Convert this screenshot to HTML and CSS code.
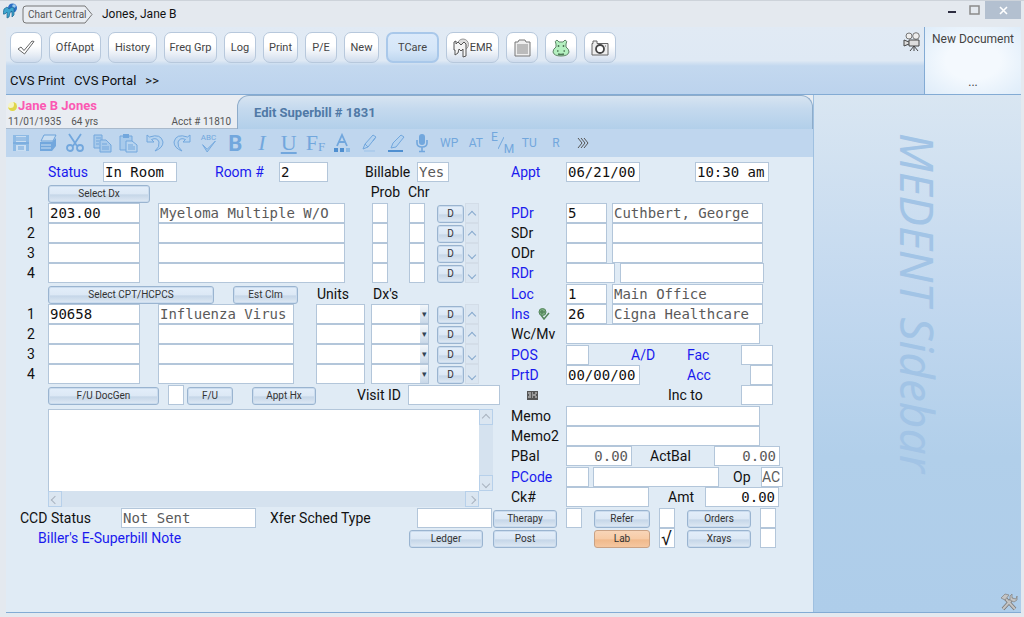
FILE: index.html
```html
<!DOCTYPE html>
<html lang="en">
<head>
    <meta charset="UTF-8">
    <meta name="viewport" content="width=device-width, initial-scale=1.0">
    <title>Jones, Jane B</title>
    <link rel="stylesheet" href="styles.css">
</head>
<body>
    <div class="window">
        <header class="titlebar">
            <svg class="app-icon" viewBox="0 0 16 16"><circle cx="9.500" cy="5" r="4.500" fill="#2b6fc4"/><circle cx="11" cy="3" r="1.800" fill="#9ccbf0"/><path d="M1 6l3-2 2 2 3-2 2 1v7l-2 2V8L7 9.500 6 14l-2 1V9L2 11H0z" fill="#3fa6cf" stroke="#1c6691" stroke-width=".7"/></svg>
            <button class="crumb" type="button">
                <svg viewBox="0 0 71 19"><path d="M4 1h59l7 8.500-7 8.500H4q-3 0-3-3V4q0-3 3-3z" fill="#e9edf2" stroke="#777" /></svg>
                <span>Chart Central</span>
            </button>
            <h1>Jones, Jane B</h1>
            <div class="window-controls">
                <button type="button" aria-label="Minimize"><svg width="10" height="12" viewBox="0 0 10 12"><path d="M1 8h8" stroke="#2d2d40" stroke-width="2"/></svg></button>
                <button type="button" aria-label="Maximize"><svg width="11" height="10" viewBox="0 0 11 10"><path d="M1 1h9v8H1z" fill="none" stroke="#8b8b8b" stroke-width="1.500"/></svg></button>
                <button type="button" class="close" aria-label="Close"><svg width="9" height="9" viewBox="0 0 9 9"><path d="M1 1l7 7M8 1L1 8" stroke="#fff" stroke-width="1.600"/></svg></button>
            </div>
        </header>

        <div class="topbar">
            <div class="topbar-main">
                <nav class="toolbar">
                    <button type="button" class="tool w-sm" aria-label="OK"><svg width="18" height="15" viewBox="0 0 18 15"><path d="M1 9l3-2 3 3.500L15 1l2 .5L7.500 14z" fill="#fff" stroke="#666"/></svg></button>
                    <button type="button" class="tool w-lg">OffAppt</button>
                    <button type="button" class="tool w-md">History</button>
                    <button type="button" class="tool w-xl">Freq Grp</button>
                    <button type="button" class="tool w-sm">Log</button>
                    <button type="button" class="tool w-ms">Print</button>
                    <button type="button" class="tool w-sm">P/E</button>
                    <button type="button" class="tool w-ms">New</button>
                    <button type="button" class="tool w-xl active">TCare</button>
                    <button type="button" class="tool w-xl"><svg width="17" height="20" viewBox="0 0 17 20"><circle cx="10" cy="6.500" r="5.500" fill="#ddd" stroke="#999"/><path d="M1 4l2-1v3l2-2 3 3 3-3 2 2v12l-3 1v-8l-2 2-2-2-1 4-3 2v-5H1z" fill="#f4f4f4" stroke="#555"/></svg>EMR</button>
                    <button type="button" class="tool w-sm" aria-label="Clipboard"><svg width="17" height="18" viewBox="0 0 17 18"><path d="M1 3h3l1-2h6l1 2h4v14H1z" fill="#eee" stroke="#777"/><path d="M3 6h11M3 8h11M3 10h11M3 12h11M3 14h11" stroke="#888"/></svg></button>
                    <button type="button" class="tool w-sm" aria-label="Hippo"><svg width="18" height="18" viewBox="0 0 18 18"><path d="M4 5q-2-3 1-4l2 2h4l2-2q3 1 1 4v3q3 2 3 5-1 4-8 4t-8-4q0-3 3-5z" fill="#b4f0c0" stroke="#5f8568"/><path d="M6.500 6v2M11.500 6v2M5 12h1.500M11.500 12H13M6 15q3 1 6 0" fill="none" stroke="#4f7757" stroke-width="1.500"/></svg></button>
                    <button type="button" class="tool w-sm" aria-label="Camera"><svg width="18" height="16" viewBox="0 0 18 16"><path d="M1 3.500h1V1h4v2.500h11V15H1z" fill="#eee" stroke="#666"/><circle cx="9" cy="9" r="4" fill="#fff" stroke="#444" stroke-width="1.800"/><path d="M14 6h1" stroke="#666"/></svg></button>
                </nav>
                <nav class="links">
                    <a href="#">CVS Print</a>
                    <a href="#">CVS Portal</a>
                    <a href="#">&gt;&gt;</a>
                </nav>
            </div>
            <svg class="movie" viewBox="0 0 18 20"><circle cx="6" cy="4" r="3" fill="#eee" stroke="#777"/><circle cx="13" cy="4" r="3.300" fill="#eee" stroke="#777"/><path d="M6 8h10v6H6zM6 10L1 8v6l5-2" fill="#ddd" stroke="#444"/><path d="M11 14l-4 5M11 14v5M11 14l4 5" stroke="#444"/></svg>
            <aside class="new-document">
                <p>New Document</p>
                <p class="dots">...</p>
            </aside>
        </div>

        <div class="content">
            <main>
                <div class="tabs">
                    <section class="patient">
                        <h2><span class="moon"></span>Jane B Jones</h2>
                        <p><span>11/01/1935</span><span class="age">64 yrs</span><span class="acct">Acct # 11810</span></p>
                    </section>
                    <h3 class="tab">Edit Superbill # 1831</h3>
                </div>

                <div class="edit-bar">
                    <button type="button" aria-label="Save"><svg viewBox="0 0 20 20"><path d="M2 2h16v16H2z" fill="#8dbae5"/><path d="M5 3h10v6H5zM5 12h10v6H5z" fill="#c9def2"/><path d="M5 5h10M5 7h10M7 14h6M7 16h6M2 10h16" stroke="#6ca3da"/></svg></button>
                    <button type="button" aria-label="Print"><svg viewBox="0 0 20 20"><path d="M6 2h12l-3 6H3z" fill="#c9def2" stroke="#6ca3da"/><path d="M2 9h12l4-4v8l-4 5H2z" fill="#72a7dd"/><path d="M3 12h10M3 15h10M8 4h7M7 6h7" stroke="#c9def2"/></svg></button>
                    <button type="button" aria-label="Cut"><svg viewBox="0 0 20 20"><path d="M4 1l8 12M16 1L8 13" stroke="#72a7dd" stroke-width="1.800"/><circle cx="5" cy="15" r="3" fill="none" stroke="#72a7dd" stroke-width="1.800"/><circle cx="15" cy="15" r="3" fill="none" stroke="#72a7dd" stroke-width="1.800"/></svg></button>
                    <button type="button" aria-label="Copy"><svg viewBox="0 0 20 20"><path d="M2 2h8v13H2z" fill="#a8caeb" stroke="#72a7dd"/><path d="M8 7h6l5 5v7H8z" fill="#a8caeb" stroke="#72a7dd"/><path d="M4 5h5M4 8h3M4 11h3M10 11h5M10 14h7M10 16h7" stroke="#72a7dd"/></svg></button>
                    <button type="button" aria-label="Paste"><svg viewBox="0 0 20 20"><path d="M2 3h12v14H2z" fill="#a8caeb" stroke="#72a7dd"/><path d="M5 1h6v4H5z" fill="#72a7dd"/><path d="M8 8h6l5 4v7H8z" fill="#b8d4ef" stroke="#72a7dd"/><path d="M10 12h5M10 14h7M10 16h7" stroke="#72a7dd"/></svg></button>
                    <button type="button" aria-label="Undo"><svg viewBox="0 0 20 20"><path d="M2 2v7h7L6.500 6.500Q12 4 14 9q1 5-4 9 8-3 8-9Q16 0 4.500 4z" fill="#b6d3ef" stroke="#72a7dd"/></svg></button>
                    <button type="button" aria-label="Redo"><svg viewBox="0 0 20 20"><path d="M18 2v7h-7l2.500-2.500Q8 4 6 9q-1 5 4 9-8-3-8-9Q4 0 15.500 4z" fill="#b6d3ef" stroke="#72a7dd"/></svg></button>
                    <button type="button" class="spell"><span>ABC</span><svg viewBox="0 0 20 12"><path d="M3 4l5 5 9-9-9 12z" fill="#a8caeb" stroke="#72a7dd"/></svg></button>
                    <button type="button" class="glyph bold">B</button>
                    <button type="button" class="glyph italic">I</button>
                    <button type="button" class="glyph under">U</button>
                    <button type="button" class="glyph font">F<small>F</small></button>
                    <button type="button" aria-label="Font color"><svg viewBox="0 0 20 20"><path d="M5 13L10 2l5 11M7 9h6" fill="none" stroke="#72a7dd" stroke-width="1.800"/><path d="M2 15h4v4H2zM8 15h4v4H8z" fill="#4f8fd0"/><path d="M14 15h4v4h-4z" fill="#8dbae5"/></svg></button>
                    <button type="button" aria-label="Pencil"><svg viewBox="0 0 20 20"><path d="M4 16l2-5 8-9 3 2-8 10zM14 8l2-3M6 11l3 3" fill="#b6d3ef" stroke="#72a7dd"/><path d="M5 18h11" stroke="#9dc3e9"/></svg></button>
                    <button type="button" aria-label="Highlighter"><svg viewBox="0 0 20 20"><path d="M5 15l2-5 8-8 3 2-8 10z" fill="#b6d3ef" stroke="#72a7dd"/><path d="M2 18h15" stroke="#4f8fd0" stroke-width="2"/></svg></button>
                    <button type="button" aria-label="Dictate"><svg viewBox="0 0 20 20"><rect x="7" y="1" width="6" height="11" rx="3" fill="#72a7dd"/><path d="M5 7v3q0 4 5 4t5-4V7M10 14v4M7 18.500h6" fill="none" stroke="#72a7dd" stroke-width="1.600"/></svg></button>
                    <button type="button">WP</button>
                    <button type="button">AT</button>
                    <button type="button" class="em"><span>E</span><svg viewBox="0 0 6 14"><path d="M6 1L0 13" stroke="#72a7dd"/></svg><span>M</span></button>
                    <button type="button">TU</button>
                    <button type="button">R</button>
                    <button type="button" aria-label="More"><svg class="more" viewBox="0 0 12 12"><path d="M1 1l4 5-4 5M4 1l4 5-4 5M7 1l4 5-4 5" fill="none" stroke="#555"/></svg></button>
                </div>

                <form class="superbill">
                    <div class="columns">
                        <div class="left">
                            <div class="row status-row">
                                <label class="blue" for="status">Status</label>
                                <input id="status" class="w8" value="In Room">
                                <label class="blue" for="room">Room #</label>
                                <input id="room" class="w5" value="2">
                                <label for="billable">Billable</label>
                                <input id="billable" class="w3" value="Yes" readonly>
                            </div>
                            <div class="head-row dx-head">
                                <button type="button" class="btn">Select Dx</button>
                                <span>Prob</span>
                                <span>Chr</span>
                            </div>
                            <div class="group dx">
                                <div class="row">
                                    <span>1</span><input class="code" aria-label="Dx code 1" value="203.00"><input class="desc" aria-label="Diagnosis 1" value="Myeloma Multiple W/O" readonly>
                                    <input class="tick" aria-label="Prob 1"><input class="tick" aria-label="Chr 1"><button type="button" class="btn d">D</button><button type="button" class="arrow up" aria-label="First"></button>
                                </div>
                                <div class="row">
                                    <span>2</span><input class="code" aria-label="Dx code 2"><input class="desc" aria-label="Diagnosis 2" readonly>
                                    <input class="tick" aria-label="Prob 2"><input class="tick" aria-label="Chr 2"><button type="button" class="btn d">D</button><button type="button" class="arrow up" aria-label="Up"></button>
                                </div>
                                <div class="row">
                                    <span>3</span><input class="code" aria-label="Dx code 3"><input class="desc" aria-label="Diagnosis 3" readonly>
                                    <input class="tick" aria-label="Prob 3"><input class="tick" aria-label="Chr 3"><button type="button" class="btn d">D</button><button type="button" class="arrow down" aria-label="Down"></button>
                                </div>
                                <div class="row">
                                    <span>4</span><input class="code" aria-label="Dx code 4"><input class="desc" aria-label="Diagnosis 4" readonly>
                                    <input class="tick" aria-label="Prob 4"><input class="tick" aria-label="Chr 4"><button type="button" class="btn d">D</button><button type="button" class="arrow down" aria-label="Last"></button>
                                </div>
                            </div>
                            <div class="head-row cpt-head">
                                <button type="button" class="btn">Select CPT/HCPCS</button>
                                <button type="button" class="btn">Est Clm</button>
                                <span>Units</span>
                                <span>Dx's</span>
                            </div>
                            <div class="group cpt">
                                <div class="row">
                                    <span>1</span><input class="code" aria-label="CPT code 1" value="90658"><input class="desc" aria-label="Procedure 1" value="Influenza Virus" readonly>
                                    <input class="w5" aria-label="Units 1"><span class="combo"><select aria-label="Dx's 1"><option></option></select></span><button type="button" class="btn d">D</button><button type="button" class="arrow up" aria-label="First"></button>
                                </div>
                                <div class="row">
                                    <span>2</span><input class="code" aria-label="CPT code 2"><input class="desc" aria-label="Procedure 2" readonly>
                                    <input class="w5" aria-label="Units 2"><span class="combo"><select aria-label="Dx's 2"><option></option></select></span><button type="button" class="btn d">D</button><button type="button" class="arrow up" aria-label="Up"></button>
                                </div>
                                <div class="row">
                                    <span>3</span><input class="code" aria-label="CPT code 3"><input class="desc" aria-label="Procedure 3" readonly>
                                    <input class="w5" aria-label="Units 3"><span class="combo"><select aria-label="Dx's 3"><option></option></select></span><button type="button" class="btn d">D</button><button type="button" class="arrow down" aria-label="Down"></button>
                                </div>
                                <div class="row">
                                    <span>4</span><input class="code" aria-label="CPT code 4"><input class="desc" aria-label="Procedure 4" readonly>
                                    <input class="w5" aria-label="Units 4"><span class="combo"><select aria-label="Dx's 4"><option></option></select></span><button type="button" class="btn d">D</button><button type="button" class="arrow down" aria-label="Last"></button>
                                </div>
                            </div>
                            <div class="row visit-row">
                                <button type="button" class="btn">F/U DocGen</button>
                                <input class="tick" aria-label="Follow up">
                                <button type="button" class="btn fu">F/U</button>
                                <button type="button" class="btn appt">Appt Hx</button>
                                <label for="visit">Visit ID</label>
                                <input id="visit">
                            </div>
                            <div class="note">
                                <textarea aria-label="Note"></textarea>
                                <div class="vbar"><i class="arrow up"></i><i class="arrow down"></i></div>
                                <div class="hbar"><i class="arrow prev"></i><i class="arrow next"></i></div>
                            </div>
                        </div>

                        <div class="right">
                            <div class="row appt-row">
                                <label class="blue" for="appt">Appt</label>
                                <input id="appt" class="w8" value="06/21/00">
                                <input class="w8" aria-label="Appt time" value="10:30 am">
                            </div>
                            <div class="group">
                                <div class="row provider"><label class="blue" for="pdr">PDr</label><input id="pdr" value="5"><input aria-label="PDr name" value="Cuthbert, George" readonly></div>
                                <div class="row provider"><label for="sdr">SDr</label><input id="sdr"><input aria-label="SDr name" readonly></div>
                                <div class="row provider"><label for="odr">ODr</label><input id="odr"><input aria-label="ODr name" readonly></div>
                                <div class="row provider wide"><label class="blue" for="rdr">RDr</label><input id="rdr"><input aria-label="RDr name" readonly></div>
                            </div>
                            <div class="group">
                                <div class="row provider"><label class="blue" for="loc">Loc</label><input id="loc" value="1"><input aria-label="Location name" value="Main Office" readonly></div>
                                <div class="row provider"><label class="blue ins" for="ins">Ins <svg width="12" height="12" viewBox="0 0 12 12"><circle cx="4.500" cy="4" r="3.500" fill="#7cae83" stroke="#55865c"/><path d="M3 7l3 4 5-6M4 2v4M2 4h5" fill="none" stroke="#55865c" stroke-width="1.500"/></svg></label><input id="ins" value="26"><input aria-label="Insurance name" value="Cigna Healthcare" readonly></div>
                                <div class="row memo"><label for="wcmv">Wc/Mv</label><input id="wcmv"></div>
                            </div>
                            <div class="group codes">
                                <div class="row"><label class="blue" for="pos">POS</label><input id="pos" class="w2"><a class="blue" href="#">A/D</a><label class="blue" for="fac">Fac</label><input id="fac" class="w3 end"></div>
                                <div class="row"><label class="blue" for="prtd">PrtD</label><input id="prtd" class="w8" value="00/00/00"><i></i><label class="blue" for="acc">Acc</label><input id="acc" class="w2 end"></div>
                                <div class="row inc"><svg width="11" height="9" viewBox="0 0 11 9"><path d="M0 0h11v9H0z" fill="#555"/><path d="M1 2h3M5 2h1M8 2h2M2 4h2M5 4h4M1 6h3M5 6h1M8 6h2" stroke="#ddd"/></svg><label for="inc">Inc to</label><input id="inc" class="w3 end"></div>
                            </div>
                            <div class="group">
                                <div class="row memo"><label for="memo">Memo</label><input id="memo"></div>
                                <div class="row memo"><label for="memo2">Memo2</label><input id="memo2"></div>
                                <div class="row balance"><label for="pbal">PBal</label><input id="pbal" value="0.00" readonly><label for="actbal">ActBal</label><input id="actbal" value="0.00" readonly></div>
                            </div>
                            <div class="group">
                                <div class="row pcode"><label class="blue" for="pcode">PCode</label><input id="pcode" class="w2"><input aria-label="PCode name"><label for="op">Op</label><input id="op" value="AC" readonly></div>
                                <div class="row check"><label for="ck">Ck#</label><input id="ck"><label for="amt">Amt</label><input id="amt" value="0.00"></div>
                            </div>
                        </div>
                    </div>

                    <div class="bottom">
                        <div class="bottom-left">
                            <div class="row ccd">
                                <label for="ccd">CCD Status</label>
                                <input id="ccd" value="Not Sent" readonly>
                                <label for="xfer">Xfer Sched Type</label>
                                <input id="xfer">
                            </div>
                            <div class="row biller">
                                <a class="blue" href="#">Biller's E-Superbill Note</a>
                                <button type="button" class="btn">Ledger</button>
                            </div>
                        </div>
                        <div class="orders">
                            <button type="button" class="btn">Therapy</button><input class="tick" aria-label="Therapy">
                            <button type="button" class="btn">Refer</button><input class="tick" aria-label="Refer">
                            <button type="button" class="btn">Orders</button><input class="tick" aria-label="Orders">
                            <button type="button" class="btn">Post</button><i></i>
                            <button type="button" class="btn hot">Lab</button><input class="tick checked" aria-label="Lab" value="√">
                            <button type="button" class="btn">Xrays</button><input class="tick" aria-label="Xrays">
                        </div>
                    </div>
                </form>
            </main>

            <aside class="sidebar">
                <p>MEDENT Sidebar</p>
                <svg class="tools" viewBox="0 0 18 18"><path d="M3 16L13 5M5 5l10 11" stroke="#777" stroke-width="3.600"/><path d="M3 16L13 5M5 5l10 11" stroke="#c4c4c4" stroke-width="2"/><path d="M1 5l4-4 4 1-4 5zM12 1v4l4 1 1-3v4l-3 2-4-2V3z" fill="#c4c4c4" stroke="#888" stroke-width=".8"/></svg>
            </aside>
        </div>
    </div>
</body>
</html>
```

FILE: styles.css
```css
:root {
    --field-border: #b3c6da;
    --form-bg: #e0ebf5;
    --line: #83abd4;
    --blue: #1a1aee;
}

* {
    margin: 0;
    padding: 0;
    box-sizing: border-box;
}

body {
    background-color: #e4e9ef;
    color: #111;
    font-family: Roboto, "Open Sans", sans-serif;
    font-size: 14px;
    line-height: 20px;
}

button,
input,
select,
textarea {
    font-family: inherit;
    border-radius: 0;
}

button {
    border: none;
    background: none;
}

a {
    color: inherit;
    text-decoration: none;
}

.window {
    display: flex;
    flex-direction: column;
    min-height: 100vh;
    padding: 0 3px 4px 6px;
    border-top: 1px solid #cdd3da;
}

/* title bar */
.titlebar {
    display: flex;
    align-items: center;
    height: 26px;
}

.app-icon {
    width: 16px;
    height: 16px;
    margin: 0 0 6px -3px;
}

.crumb {
    position: relative;
    width: 71px;
    height: 19px;
    margin-left: 3px;
    font-size: 10px;
    color: #555;
}

.crumb svg {
    display: block;
    width: 71px;
    height: 19px;
}

.crumb span {
    position: absolute;
    left: 6px;
    top: 0;
    line-height: 19px;
    white-space: nowrap;
}

.titlebar h1 {
    margin-left: 9px;
    font-size: 12px;
    font-weight: 400;
}

.window-controls {
    display: flex;
    align-self: flex-start;
    margin-left: auto;
}

.window-controls button {
    display: flex;
    align-items: center;
    justify-content: center;
    width: 22px;
    height: 18px;
}

.window-controls .close {
    width: 36px;
    background-color: #b3c0d0;
}

/* top toolbar */
.topbar {
    display: flex;
    height: 68px;
    border-bottom: 1px solid var(--line);
    background-image: linear-gradient(#e1eaf4, #dfe9f4 50%, #c3d8ef 58%, #bcd3ed);
}

.topbar-main {
    flex: 1;
}

.toolbar {
    display: flex;
    gap: 7px;
    padding: 5px 4px 0;
}

.tool {
    display: flex;
    align-items: center;
    justify-content: center;
    height: 31px;
    border: 1px solid #b7c8dc;
    border-radius: 7px;
    background-image: linear-gradient(#fff 45%, #e7edf5 75%, #cfdced);
    color: #444;
    font-size: 11px;
}

.tool.active {
    border: 2px solid #a9c8ea;
    background-image: linear-gradient(#dceafa, #d5e6f8 60%, #bfd7f0);
}

.w-sm { width: 32px; }
.w-ms { width: 35px; }
.w-md { width: 49px; }
.w-lg { width: 52px; }
.w-xl { width: 53px; }

.links {
    display: flex;
    gap: 9px;
    padding: 8px 4px 0;
    font-size: 13px;
}

.movie {
    width: 18px;
    height: 20px;
    margin: 5px 3px;
}

.new-document {
    display: flex;
    flex-direction: column;
    justify-content: space-between;
    width: 97px;
    padding: 2px 0;
    border-left: 1px solid var(--line);
    background-image: radial-gradient(#f4f9fe 40%, #deecf9);
    color: #444;
    font-size: 12px;
    text-align: center;
}

/* patient and tab strip */
.content {
    display: flex;
    flex: 1;
    border-bottom: 1px solid var(--line);
}

main {
    display: flex;
    flex: 1;
    flex-direction: column;
    background-color: var(--form-bg);
}

.tabs {
    display: flex;
    height: 34px;
    background-color: #e9edf2;
}

.patient {
    width: 231px;
    padding: 2px 6px 0 2px;
    border-bottom: 1px solid #a9b9cb;
}

.patient h2 {
    display: flex;
    align-items: center;
    color: #fb59b3;
    font-size: 13px;
    line-height: 18px;
}

.moon {
    width: 9px;
    height: 9px;
    margin-right: 1px;
    border-radius: 50%;
    background-color: #f6f4c4;
    box-shadow: inset -2px -2px 0 1px #dfd64a;
}

.patient p {
    display: flex;
    color: #555;
    font-size: 10px;
    line-height: 13px;
}

.age {
    margin-left: 10px;
}

.acct {
    margin-left: auto;
}

.tab {
    flex: 1;
    padding-left: 16px;
    border: 1px solid #8eacca;
    border-bottom: none;
    border-radius: 12px 12px 0 0;
    background-image: linear-gradient(#d7e4f1, #c4d9ee 40%, #b2cfea);
    color: #5079a6;
    font-size: 13px;
    line-height: 34px;
}

.edit-bar {
    display: flex;
    height: 28px;
    padding-right: 217px;
    padding-left: 2px;
    background-color: #bfd6ee;
}

.edit-bar button {
    display: flex;
    flex: 1;
    align-items: center;
    justify-content: center;
    width: 0;
    color: #72a7dd;
    font-size: 12px;
}

.edit-bar svg {
    width: 20px;
    height: 20px;
    flex-shrink: 0;
}

.edit-bar .more {
    width: 12px;
    height: 12px;
}

.edit-bar .spell {
    flex-direction: column;
    font-size: 8px;
    line-height: 7px;
}

.edit-bar .spell svg {
    height: 11px;
}

.edit-bar .glyph {
    font-family: "Liberation Serif", serif;
    font-size: 22px;
}

.edit-bar .bold {
    font-family: Roboto, sans-serif;
    font-weight: 700;
}

.italic {
    font-style: italic;
}

.under {
    text-decoration: underline;
}

.glyph small {
    align-self: flex-end;
    font-size: 13px;
    line-height: 20px;
}

.em {
    line-height: 22px;
}

.em span:first-child {
    align-self: flex-start;
    line-height: 16px;
}

.em span:last-child {
    align-self: flex-end;
    line-height: 16px;
}

.edit-bar .em svg {
    width: 6px;
    height: 14px;
}

/* form */
.superbill {
    padding: 5px 0 60px 14px;
}

.columns {
    display: flex;
    gap: 10px;
}

.left,
.right {
    display: flex;
    flex-direction: column;
    gap: 1px;
}

.left {
    width: 481px;
}

.right {
    flex: 1;
}

.row,
.head-row {
    display: grid;
    height: 20px;
    white-space: nowrap;
}

.head-row {
    margin-bottom: -1px;
    padding-left: 28px;
}

.row .btn,
.head-row .btn {
    align-self: end;
}

.row > span:first-child {
    padding-left: 7px;
}

.blue {
    color: var(--blue);
}

input,
select,
textarea {
    width: 100%;
    height: 20px;
    padding: 0 1px;
    border: 1px solid var(--field-border);
    background-color: #fff;
    color: #111;
    font-family: "DejaVu Sans Mono", monospace;
    font-size: 14px;
    outline: none;
}

input[readonly] {
    color: #5a5a5a;
}

.w2 { width: 23px; }
.w3 { width: 32px; }
.w5 { width: 49px; }
.w8 { width: 74px; }
.tick { width: 16px; }
.code { width: 92px; }

.checked {
    font-size: 18px;
}

.btn {
    height: 18px;
    border: 1px solid #9ab4d0;
    border-radius: 3px;
    background-image: linear-gradient(#e3eefa, #dce8f5 50%, #c5d6e8 55%, #dfe9f4);
    box-shadow: inset 0 0 0 1px #cbdcee;
    color: #333;
    font-size: 10px;
    line-height: 16px;
}

.btn.hot {
    border-color: #c9a285;
    background-image: linear-gradient(#f8d5b8, #f7cba6 50%, #f0b98c 55%, #f5c7a0);
    box-shadow: none;
}

.btn.d {
    width: 27px;
}

.arrow {
    position: relative;
    display: block;
    width: 14px;
    height: 20px;
    border: 1px solid #d3dde8;
    background-color: #dbe6f1;
}

.arrow::before {
    content: '';
    position: absolute;
    top: 8px;
    left: 3px;
    width: 5px;
    height: 5px;
    border: solid #86a9cd;
    border-width: 1px 0 0 1px;
    transform: rotate(45deg);
}

.arrow.down::before {
    transform: rotate(225deg);
}

.arrow.prev::before {
    transform: rotate(-45deg);
}

.arrow.next::before {
    transform: rotate(135deg);
}

/* left column */
.status-row {
    grid-template-columns: 55px 112px 64px 86px 52px 32px;
    padding-left: 28px;
}

.dx-head {
    grid-template-columns: 102px 242px 89px;
    column-gap: 8px;
    line-height: 18px;
}

.dx-head span:nth-child(2) {
    justify-self: end;
}

.dx .row {
    grid-template-columns: 28px 110px 214px 37px 28px 28px 14px;
}

.dx .desc {
    width: 187px;
}

.cpt-head {
    grid-template-columns: 166px 65px 37px 60px;
    column-gap: 19px;
}

.cpt .row {
    grid-template-columns: 28px 110px 158px 55px 66px 28px 14px;
}

.cpt .desc {
    width: 136px;
}

.combo {
    position: relative;
    width: 58px;
}

.combo select {
    display: block;
    appearance: none;
}

.combo::after {
    content: '▾';
    position: absolute;
    top: 1px;
    right: 1px;
    width: 8px;
    height: 18px;
    background-image: linear-gradient(#f3f7fb, #c9d8e8);
    color: #345;
    font-size: 9px;
    line-height: 19px;
    text-align: center;
    pointer-events: none;
}

.visit-row {
    grid-template-columns: 120px 19px 65px 105px 51px 92px;
    padding-left: 28px;
    margin-bottom: 3px;
}

.visit-row .btn {
    width: 111px;
}

.visit-row .fu {
    width: 46px;
}

.visit-row .appt {
    width: 64px;
}

.note {
    display: grid;
    grid-template: 82px 16px / 1fr 14px;
    margin: 0 8px 0 28px;
}

.note textarea {
    display: block;
    height: 82px;
    border-right: none;
    border-bottom: none;
    resize: none;
}

.vbar,
.hbar {
    display: flex;
    justify-content: space-between;
    background-color: #d5e2ef;
}

.vbar {
    flex-direction: column;
}

.note .arrow {
    height: 16px;
    border-color: #b7d0ea;
}

.note .arrow::before {
    top: 5px;
    border-color: #a9b3bf;
}

/* right column */
.appt-row {
    grid-template-columns: 55px 129px 74px;
    margin-bottom: 20px;
}

.provider {
    grid-template-columns: 55px 41px 151px;
    column-gap: 0;
}

.provider input:nth-of-type(2) {
    margin-left: 5px;
}

.provider.wide {
    grid-template-columns: 55px 49px 144px;
}

.ins {
    display: flex;
    align-items: center;
    gap: 8px;
}

.memo {
    grid-template-columns: 55px 194px;
}

.codes .row {
    grid-template-columns: 55px 65px 56px 32px 54px;
}

.codes .inc {
    grid-template-columns: 157px 51px 54px;
}

.inc svg {
    place-self: center start;
    margin-left: 16px;
}

.end {
    justify-self: end;
}

.balance {
    grid-template-columns: 55px 66px 82px 66px;
}

.balance label:nth-of-type(2) {
    padding-left: 18px;
}

.balance input,
#amt {
    padding-right: 3px;
    text-align: right;
}

.pcode {
    grid-template-columns: 55px 27px 126px 42px 22px;
}

.pcode label:nth-of-type(2) {
    padding-left: 14px;
}

#op {
    padding: 0;
    font-family: inherit;
}

.check {
    grid-template-columns: 55px 83px 56px 74px;
}

.check label:nth-of-type(2) {
    padding-left: 19px;
}

/* bottom rows */
.bottom {
    display: flex;
    gap: 1px;
    margin-top: 1px;
}

.bottom-left {
    width: 472px;
}

.ccd {
    grid-template-columns: 101px 149px 147px 75px;
}

#ccd {
    width: 135px;
}

.biller {
    grid-template-columns: 371px 74px;
    padding-left: 18px;
}

.orders {
    display: grid;
    grid-template-columns: 64px 19px 56px 19px 64px 19px;
    grid-auto-rows: 20px;
    column-gap: 9px;
    align-items: end;
}

/* right sidebar */
.sidebar {
    position: relative;
    width: 208px;
    border-left: 1px solid #9fc0e0;
    background-image: linear-gradient(#d9e6f2, #c2d8ef 40%, #b1cfea 70%, #aecdea);
}

.sidebar p {
    padding: 38px 0 0 76px;
    color: #a2c4e6;
    font-family: "Noto Sans", "Open Sans", sans-serif;
    font-size: 46px;
    font-style: italic;
    line-height: 56px;
    white-space: nowrap;
    writing-mode: vertical-rl;
}

.tools {
    position: absolute;
    right: 3px;
    bottom: 1px;
    width: 18px;
    height: 18px;
}
```
